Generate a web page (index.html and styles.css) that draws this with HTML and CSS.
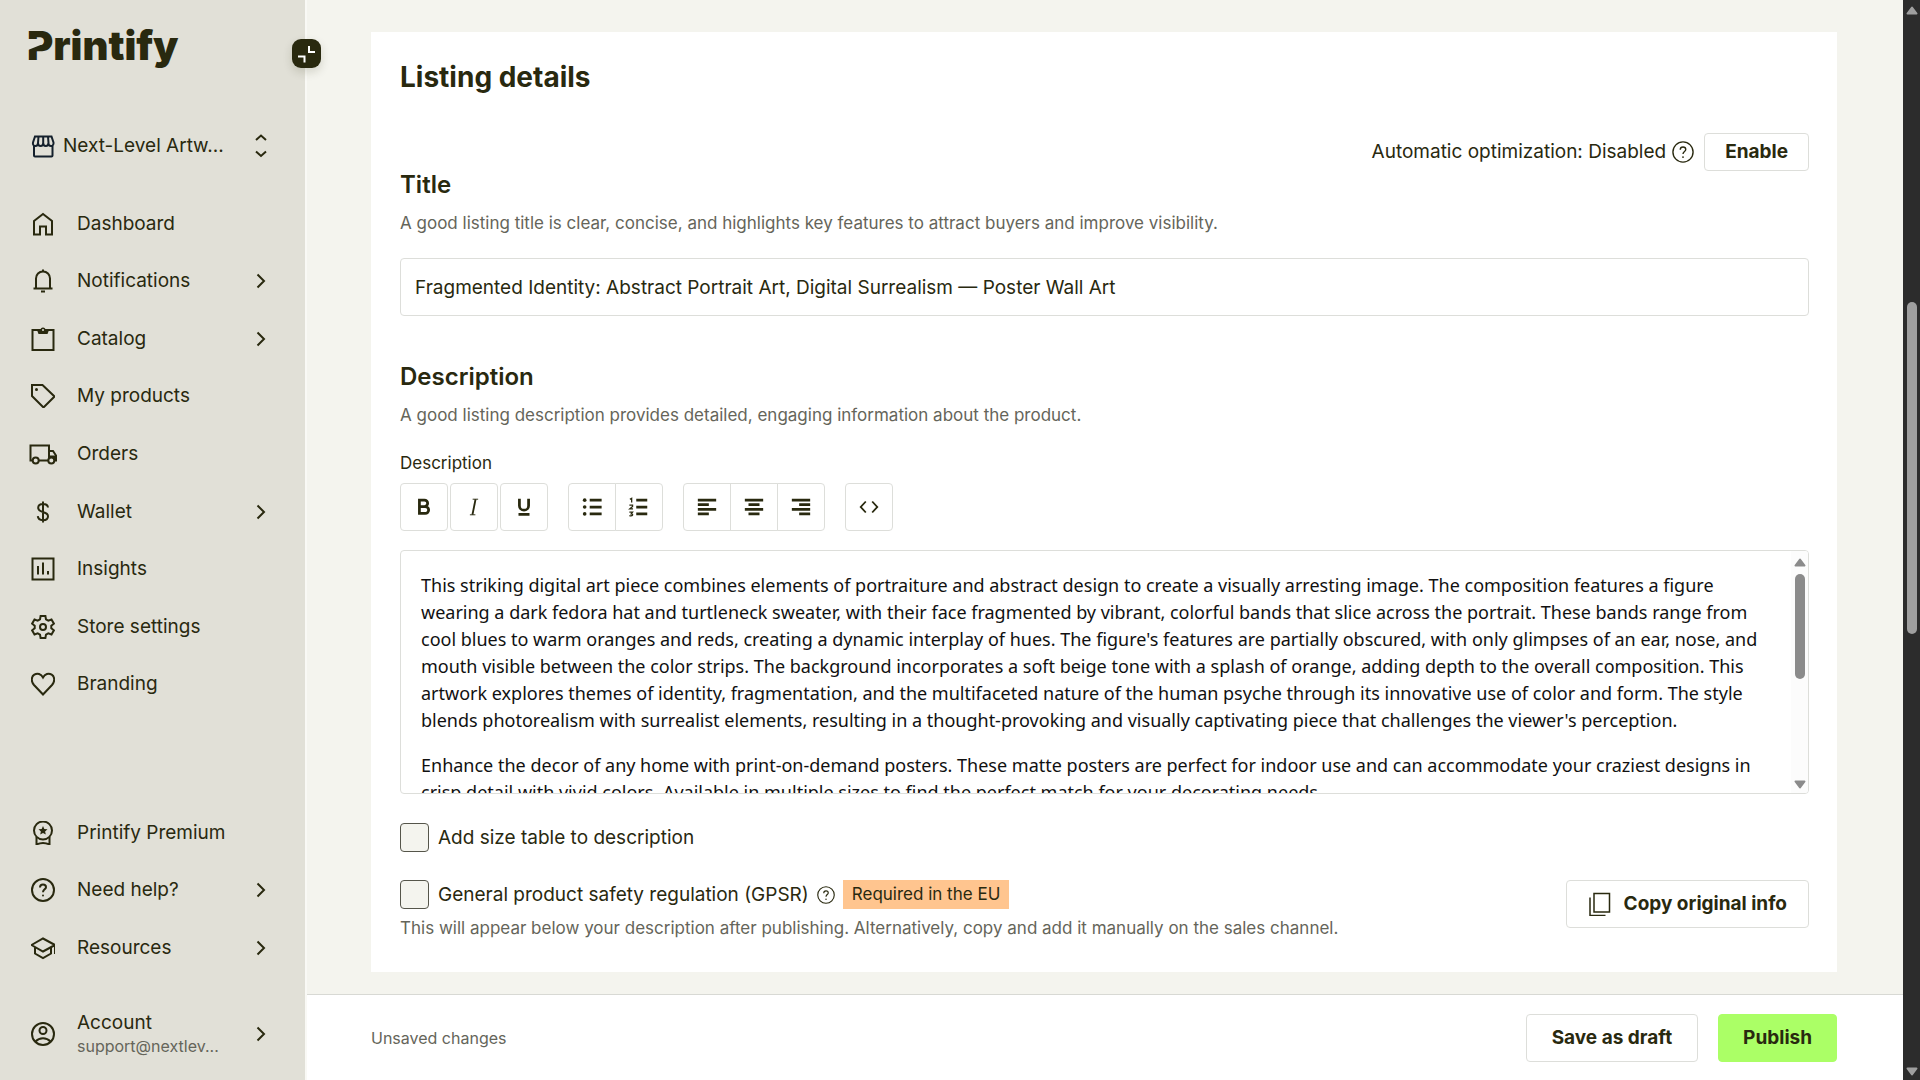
FILE: index.html
```html
<!DOCTYPE html>
<html lang="en">
<head>
<meta charset="utf-8">
<meta name="viewport" content="width=device-width, initial-scale=1">
<title>Printify – Listing details</title>
<link rel="stylesheet" href="styles.css">
</head>
<body>
<svg class="defs" aria-hidden="true">
  <symbol id="chevron" viewBox="0 0 24 24"><path d="M8.500 5.500 15 12l-6.500 6.500"/></symbol>
  <symbol id="help" viewBox="0 0 24 24"><circle cx="12" cy="12" r="11"/><path d="M9 9.500C9 7.600 10.200 6.500 12 6.500s3 1.100 3 2.700c0 2-3 2.400-3 5"/><circle class="solid" cx="12" cy="17.500" r="1"/></symbol>
</svg>
<div class="app">
  <aside class="sidebar">
    <a class="logo" href="#" aria-label="Printify">
      <svg width="180" height="60" viewBox="0 0 180 60"><text class="logo-text" x="1" y="40">Printify</text><path class="logo-cut" d="M2 19h15v5L2 30z"/></svg>
    </a>
    <button class="collapse" type="button" aria-label="Collapse menu">
      <svg width="29" height="29" viewBox="0 0 29 29"><path d="M17 7v6h6M6 17.500h6.500v6"/></svg>
    </button>
    <button class="store" type="button">
      <svg class="icon navy" viewBox="0 0 24 24"><path d="M3 12v9.500a1 1 0 0 0 1 1h16.500a1 1 0 0 0 1-1V12M4 2.500h16.500l2 6c.3 2-.8 3.500-2.500 3.500s-2.600-1.400-2.600-3c0 1.600-1 3-2.600 3s-2.600-1.400-2.600-3c0 1.600-1 3-2.600 3S7 10.600 7 9c0 1.600-.9 3-2.600 3S1.500 10.500 2 8.500zM7.500 2.500 7 9M12.200 2.500V9M17 2.500l.5 6.500"/></svg>
      <span class="store-name">Next-Level Artw...</span>
      <svg class="icon" viewBox="0 0 24 24"><path d="M7 6l5-4.500L17 6M7 17.500l5 4.500 5-4.500"/></svg>
    </button>
    <nav class="menu menu-main">
      <a href="#"><svg class="icon" viewBox="0 0 24 24"><path d="M3 9 12 2l9 7v13.500h-6v-8H9v8H3z"/></svg><span>Dashboard</span></a>
      <a href="#"><svg class="icon" viewBox="0 0 24 24"><path d="M2.500 19.500h19M5 19.500V9.500c0-4 3-7 7-7s7 3 7 7v10"/><path d="M12 .5v2M10 22.500h4"/></svg><span>Notifications</span><svg class="icon arrow"><use href="#chevron"/></svg></a>
      <a href="#"><svg class="icon" viewBox="0 0 24 24"><path d="M1.500 3h21v20h-21z"/><path class="solid" d="M6 3h3.500a2.500 2.500 0 0 1 5 0H18l-1.500 4h-9z"/><circle class="hole" cx="12" cy="3" r="1"/></svg><span>Catalog</span><svg class="icon arrow"><use href="#chevron"/></svg></a>
      <a href="#"><svg class="icon" viewBox="0 0 24 24"><path d="M1 1h10.500L23.500 12.500 12.500 23.500 1 12z"/><circle class="solid" cx="5.500" cy="5.500" r="1.500"/></svg><span>My products</span></a>
      <a href="#"><svg class="icon wide" viewBox="0 0 28 24"><path d="M4 18.500H1.500v-15H20v15H9.500M20 9h4l3 4.500v5h-1.500"/><path class="solid" d="M20 13.500h7l.500 5H20z"/><circle class="wheel" cx="6.700" cy="18.500" r="3"/><circle class="wheel" cx="22.300" cy="18.500" r="3"/></svg><span>Orders</span></a>
      <a href="#"><svg class="icon" viewBox="0 0 24 24"><path d="M12 1.500v21M17 7.500C16.800 5.300 15 4 12 4S7.200 5.500 7.200 7.800c0 2.700 2.300 3.500 4.800 4.200s5 1.600 5 4.200-2 4-5 4-5-1.500-5.200-4"/></svg><span>Wallet</span><svg class="icon arrow"><use href="#chevron"/></svg></a>
      <a href="#"><svg class="icon" viewBox="0 0 24 24"><path d="M1.500 1.500h21v21h-21zM7 9v8.500M12 5.500v12M17 14v3.500"/></svg><span>Insights</span></a>
      <a href="#"><svg class="icon" viewBox="0 0 24 24"><circle cx="12" cy="12" r="3"/><path d="M9.600 1h4.800l.6 3.400 2.300 1.300 3.200-1.200 2.400 4.200-2.600 2.100v2.400l2.600 2.100-2.400 4.200-3.200-1.200-2.300 1.300-.6 3.400H9.600L9 19.600l-2.300-1.300-3.200 1.200-2.400-4.200 2.600-2.100v-2.400L1.100 8.700l2.400-4.200 3.200 1.200L9 4.400z"/></svg><span>Store settings</span></a>
      <a href="#"><svg class="icon" viewBox="0 0 24 24"><path d="M12 22.500 3 13C-.3 9.300.3 4.500 3.300 2.700 6.500.8 10 2 12 5.500 14 2 17.500.8 20.700 2.700c3 1.800 3.600 6.600.3 10.300z"/></svg><span>Branding</span></a>
    </nav>
    <nav class="menu menu-extra">
      <a href="#"><svg class="icon" viewBox="0 0 24 24"><circle cx="12" cy="9.500" r="9"/><path d="M5.500 16v7.500c4.300-2 8.700-2 13 0V16"/><path class="solid" d="m12 5 1.300 3 3.200.3-2.400 2.100.7 3.200-2.800-1.700-2.800 1.700.7-3.200-2.400-2.100 3.200-.3z"/></svg><span>Printify Premium</span></a>
      <a href="#"><svg class="icon"><use href="#help"/></svg><span>Need help?</span><svg class="icon arrow"><use href="#chevron"/></svg></a>
      <a href="#"><svg class="icon" viewBox="0 0 24 24"><path d="M.5 9 12 2.500 24 9l-12 6.500zM4 11v6.500l8 4.500 8-4.500V11M24 9v9"/></svg><span>Resources</span><svg class="icon arrow"><use href="#chevron"/></svg></a>
    </nav>
    <a class="account" href="#">
      <svg class="icon" viewBox="0 0 24 24"><circle cx="12" cy="12" r="11"/><circle cx="12" cy="8.500" r="3.500"/><path d="M4.500 19.500c4-4.500 11-4.500 15 0"/></svg>
      <span class="account-info"><span>Account</span><small>support@nextlev...</small></span>
      <svg class="icon arrow"><use href="#chevron"/></svg>
    </a>
  </aside>

  <div class="page">
    <main class="card">
      <h1>Listing details</h1>
      <div class="optimization">
        <span>Automatic optimization: Disabled</span>
        <svg class="help"><use href="#help"/></svg>
        <button class="btn btn-small" type="button">Enable</button>
      </div>

      <h2><label for="title">Title</label></h2>
      <p class="hint">A good listing title is clear, concise, and highlights key features to attract buyers and improve visibility.</p>
      <input class="title-input" id="title" type="text" value="Fragmented Identity: Abstract Portrait Art, Digital Surrealism — Poster Wall Art">

      <h2 class="section">Description</h2>
      <p class="hint">A good listing description provides detailed, engaging information about the product.</p>
      <div class="editor-label" id="editor-label">Description</div>
      <div class="toolbar" role="toolbar" aria-label="Formatting">
        <div class="loose">
          <button type="button" aria-label="Bold"><svg viewBox="0 0 24 24"><path class="heavy" d="M7 4.500h5.500a3.400 3.400 0 0 1 0 7H7zM7 11.500h6.300a3.700 3.700 0 0 1 0 7.500H7z"/></svg></button>
          <button type="button" aria-label="Italic"><svg viewBox="0 0 24 24"><path class="thin" d="M10.500 3.500h6M7.500 20.500h6"/><path d="M13.700 3.500l-3.400 17"/></svg></button>
          <button type="button" aria-label="Underline"><svg viewBox="0 0 24 24"><path class="heavy" d="M7 3v7.500a5 5 0 0 0 10 0V3M6 20h12"/></svg></button>
        </div>
        <div class="joined">
          <button type="button" aria-label="Bulleted list"><svg viewBox="0 0 24 24"><path class="heavy" d="M9.500 4.500h13M9.500 12h13M9.500 19.500h13"/><circle class="solid" cx="4" cy="4.500" r="2"/><circle class="solid" cx="4" cy="12" r="2"/><circle class="solid" cx="4" cy="19.500" r="2"/></svg></button>
          <button type="button" aria-label="Numbered list"><svg viewBox="0 0 24 24"><path class="heavy" d="M9 4.500h12M9 12h12M9 19.500h12"/><path class="numerals" d="M2 3.500 4 2.500v4.500M1.500 10h3.500v1.500L2 14h3.500M1.500 17.500h3.500l-1.500 2c2.500 0 2 3-2 2"/></svg></button>
        </div>
        <div class="joined">
          <button type="button" aria-label="Align left"><svg viewBox="0 0 24 24"><path class="heavy" d="M2 4.500h20M2 9.500h12M2 14.500h20M2 19.500h12"/></svg></button>
          <button type="button" aria-label="Align center"><svg viewBox="0 0 24 24"><path class="heavy" d="M2 4.500h20M6 9.500h12M2 14.500h20M6 19.500h12"/></svg></button>
          <button type="button" aria-label="Align right"><svg viewBox="0 0 24 24"><path class="heavy" d="M2 4.500h20M10 9.500h12M2 14.500h20M10 19.500h12"/></svg></button>
        </div>
        <div class="joined">
          <button type="button" aria-label="Source code"><svg viewBox="0 0 24 24"><path d="M8.500 6 3 12l5.500 6M15.500 6l5.500 6-5.500 6"/></svg></button>
        </div>
      </div>
      <div class="editor">
        <div class="editor-text" contenteditable="true" role="textbox" aria-multiline="true" aria-labelledby="editor-label" spellcheck="false">
          <p>This striking digital art piece combines elements of portraiture and abstract design to create a visually arresting image. The composition features a figure wearing a dark fedora hat and turtleneck sweater, with their face fragmented by vibrant, colorful bands that slice across the portrait. These bands range from cool blues to warm oranges and reds, creating a dynamic interplay of hues. The figure's features are partially obscured, with only glimpses of an ear, nose, and mouth visible between the color strips. The background incorporates a soft beige tone with a splash of orange, adding depth to the overall composition. This artwork explores themes of identity, fragmentation, and the multifaceted nature of the human psyche through its innovative use of color and form. The style blends photorealism with surrealist elements, resulting in a thought-provoking and visually captivating piece that challenges the viewer's perception.</p>
          <p>Enhance the decor of any home with print-on-demand posters. These matte posters are perfect for indoor use and can accommodate your craziest designs in crisp detail with vivid colors. Available in multiple sizes to find the perfect match for your decorating needs.</p>
        </div>
        <div class="scroll scroll-light" aria-hidden="true">
          <svg width="12" height="9" viewBox="0 0 12 9"><path d="M6 1.500 10.500 7.500h-9z"/></svg>
          <div class="track"><div class="thumb"></div></div>
          <svg width="12" height="9" viewBox="0 0 12 9"><path d="M6 7.500 10.500 1.500h-9z"/></svg>
        </div>
      </div>

      <label class="check"><input type="checkbox"><span>Add size table to description</span></label>
      <div class="gpsr">
        <div class="gpsr-info">
          <div class="gpsr-row">
            <label class="check"><input type="checkbox"><span>General product safety regulation (GPSR)</span></label>
            <svg class="help help-small"><use href="#help"/></svg>
            <span class="badge">Required in the EU</span>
          </div>
          <p class="hint">This will appear below your description after publishing. Alternatively, copy and add it manually on the sales channel.</p>
        </div>
        <button class="btn btn-copy" type="button"><svg class="icon" viewBox="0 0 24 24"><path d="M6 1.500h15.500v18.500H6zM2 5.500v18h15.500"/></svg>Copy original info</button>
      </div>
    </main>
    <footer class="actions">
      <span class="status">Unsaved changes</span>
      <button class="btn" type="button">Save as draft</button>
      <button class="btn btn-primary" type="button">Publish</button>
    </footer>
  </div>

  <div class="scroll scroll-dark" aria-hidden="true">
    <svg width="12" height="9" viewBox="0 0 12 9"><path d="M6 1.500 10.500 7.500h-9z"/></svg>
    <div class="track"><div class="thumb"></div></div>
    <svg width="12" height="9" viewBox="0 0 12 9"><path d="M6 7.500 10.500 1.500h-9z"/></svg>
  </div>
</div>
</body>
</html>
```
FILE: styles.css
```css
:root {
  --ink: #29290f;
  --muted: #65655a;
  --line: #dddeda;
  --sand: #e1e0d7;
  --paper: #f4f4ee;
}

* { box-sizing: border-box; }

body {
  margin: 0;
  background: var(--paper);
  color: var(--ink);
  font: 400 19px/24px Inter, "Liberation Sans", sans-serif;
}

h1, h2, p { margin: 0; }
a { color: inherit; text-decoration: none; }
button { font: inherit; color: inherit; cursor: pointer; }

svg { flex: none; fill: none; stroke: currentColor; stroke-width: 2; }
.solid { fill: currentColor; stroke: none; }
.hole { fill: var(--sand); stroke: none; }
.wheel { fill: var(--sand); }
.heavy { stroke-width: 3; }
.thin { stroke-width: 1; }
.numerals { stroke-width: 1.4; }
.defs { display: none; }

.app {
  display: grid;
  grid-template-columns: 307px 1fr 17px;
  min-height: 100vh;
}

/* Sidebar */
.sidebar {
  position: relative;
  display: flex;
  flex-direction: column;
  padding: 20px 0;
  background: var(--sand);
  border-right: 2px solid #f9f9f5;
}

.logo { height: 60px; padding-left: 26px; }
.logo svg { stroke: none; }
.logo-text { fill: var(--ink); font: 900 40px Inter, sans-serif; }
.logo-cut { fill: var(--sand); }

.collapse {
  position: absolute;
  top: 39px;
  right: -16px;
  width: 29px;
  height: 29px;
  padding: 0;
  border: 0;
  border-radius: 9px;
  background: var(--ink);
  color: #fff;
  box-shadow: 0 4px 10px rgba(41, 41, 15, 0.16);
}
.collapse svg { display: block; }

.icon { width: 24px; height: 24px; }
.icon.wide { width: 28px; margin: 0 -2px; }
.navy { color: #14202c; }

.store {
  display: flex;
  align-items: center;
  gap: 8px;
  height: 40px;
  margin-top: 46px;
  padding: 0 32px 0 31px;
  border: 0;
  background: none;
  text-align: left;
}
.store-name { flex: 1; white-space: nowrap; }

.menu { display: grid; grid-auto-rows: 1fr; }
.menu-main { height: 518px; margin-top: 29px; }
.menu-extra { height: 173px; margin-top: auto; }

.menu a, .account {
  display: flex;
  align-items: center;
  gap: 22px;
  padding: 0 32px 0 31px;
}
.arrow { margin-left: auto; }

.account { height: 52px; margin-top: 31px; }
.account-info { display: flex; flex-direction: column; margin-right: -22px; }
.account small { font-size: 16px; line-height: 22px; color: var(--muted); }

/* Page */
.page { display: flex; flex-direction: column; min-width: 0; }

.card {
  flex: 1;
  margin: 32px 66px 22px 64px;
  padding: 29px 28px 31px 29px;
  background: #fff;
}

h1 { font-size: 28px; line-height: 32px; font-weight: 700; }
h2 { font-size: 24px; line-height: 28px; font-weight: 600; }
.hint { margin-top: 12px; font-size: 17px; color: var(--muted); }
.section { margin-top: 47px; }

.optimization {
  display: flex;
  align-items: center;
  justify-content: flex-end;
  gap: 6px;
  margin-top: 40px;
}
.help { width: 22px; height: 22px; stroke-width: 1.5; }
.help-small { width: 18px; height: 18px; }

.btn {
  display: flex;
  align-items: center;
  justify-content: center;
  height: 48px;
  padding: 0 25px;
  border: 1px solid var(--line);
  border-radius: 4px;
  background: #fff;
  font-weight: 700;
  white-space: nowrap;
}
.btn-small { height: 38px; margin-left: 4px; padding: 0 20px; }
.btn-copy { gap: 12px; padding: 0 21px; }
.btn-copy .icon { stroke-width: 1.5; }
.btn-primary { padding: 0 24px; border-color: #abff66; background: #abff66; }

.title-input {
  display: block;
  width: 100%;
  height: 58px;
  margin-top: 23px;
  padding: 0 14px;
  border: 1px solid var(--line);
  border-radius: 4px;
  background: #fff;
  color: inherit;
  font: inherit;
}

.editor-label { margin-top: 24px; font-size: 17px; }

.toolbar { display: flex; gap: 20px; margin-top: 8px; }
.toolbar div { display: flex; }
.toolbar button {
  display: grid;
  place-items: center;
  width: 48px;
  height: 48px;
  padding: 0;
  border: 1px solid var(--line);
  border-radius: 4px;
  background: #fff;
}
.toolbar svg { width: 22px; height: 22px; }
.loose { gap: 2px; }
.joined button:not(:first-child) { margin-left: -1px; border-top-left-radius: 0; border-bottom-left-radius: 0; }
.joined button:not(:last-child) { border-top-right-radius: 0; border-bottom-right-radius: 0; }

.editor {
  display: flex;
  height: 244px;
  margin-top: 19px;
  border: 1px solid var(--line);
  border-radius: 4px;
  overflow: hidden;
}
.editor-text {
  flex: 1;
  padding: 21px 28px 20px 20px;
  overflow: hidden;
  color: #111;
  font: 400 18px/27px "Noto Sans", "Open Sans", sans-serif;
}
.editor-text p + p { margin-top: 18px; }

/* Scroll bars */
.scroll {
  display: flex;
  flex-direction: column;
  align-items: center;
  gap: 7px;
  width: 17px;
  padding: 6px 0 4px;
}
.scroll svg { fill: currentColor; stroke-linejoin: round; }
.track { display: flex; flex-direction: column; flex: 1; }
.thumb { width: 10px; border-radius: 5px; background: currentColor; }
.scroll-light { padding-top: 7px; background: #fcfcfc; color: #8b8b8b; }
.scroll-light .thumb { height: 53%; }
.scroll-dark { background: #2c2c2c; color: #9f9f9f; }
.scroll-dark .track { padding-left: 1px; }
.scroll-dark .track::before { content: ""; flex: 0 0 27%; }
.scroll-dark .thumb { height: 32%; }

/* Options */
.check { display: flex; align-items: center; gap: 9px; width: fit-content; }
.card > .check { margin-top: 29px; }
.check input {
  appearance: none;
  width: 29px;
  height: 29px;
  margin: 0;
  border: 1px solid #55554a;
  border-radius: 4px;
  background: var(--paper);
}

.gpsr { display: flex; justify-content: space-between; align-items: flex-start; margin-top: 28px; }
.gpsr-row { display: flex; align-items: center; gap: 8px; }
.gpsr .hint { margin-top: 7px; }
.badge { padding: 2px 9px 3px; background: #ffc58f; font-size: 17px; }

/* Footer */
.actions {
  display: flex;
  align-items: center;
  gap: 20px;
  min-height: 86px;
  padding: 0 66px 0 64px;
  border-top: 1px solid #d8d9d4;
  background: #fff;
}
.status { margin-right: auto; font-size: 16px; color: var(--muted); }
```
